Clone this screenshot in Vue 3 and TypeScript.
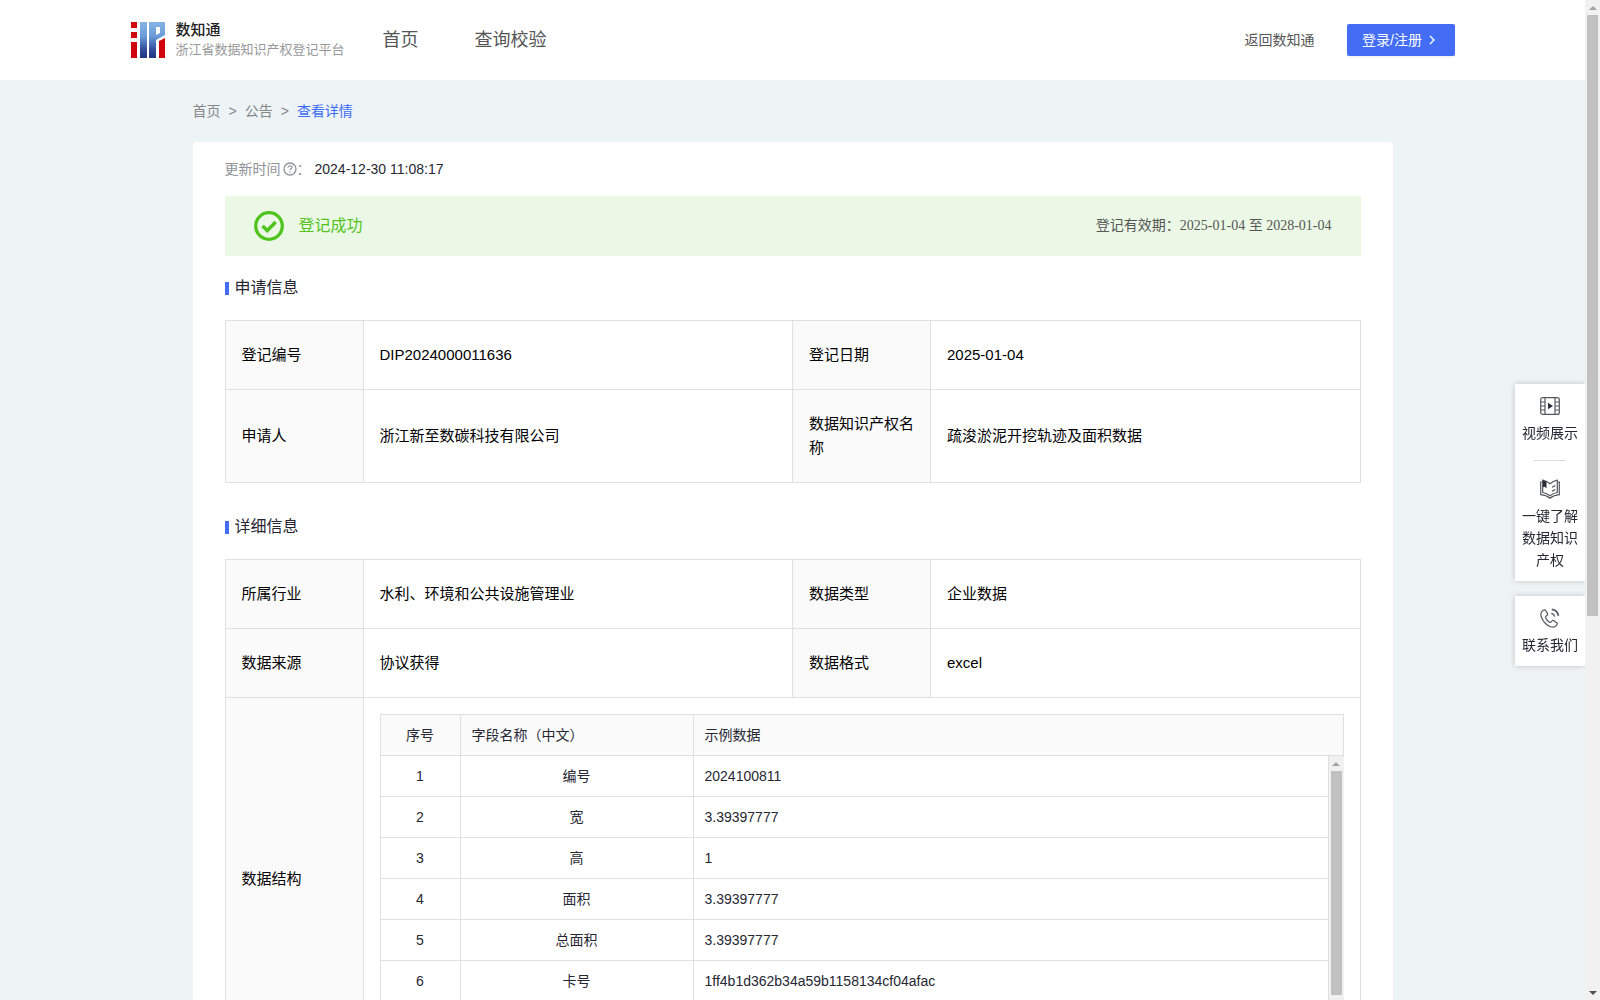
<script setup lang="ts">
import { ref } from 'vue'

interface FieldRow {
  no: number
  name: string
  sample: string
}

const navItems: string[] = ['首页', '查询校验']

const rows = ref<FieldRow[]>([
  { no: 1, name: '编号', sample: '2024100811' },
  { no: 2, name: '宽', sample: '3.39397777' },
  { no: 3, name: '高', sample: '1' },
  { no: 4, name: '面积', sample: '3.39397777' },
  { no: 5, name: '总面积', sample: '3.39397777' },
  { no: 6, name: '卡号', sample: '1ff4b1d362b34a59b1158134cf04afac' },
])
</script>

<template>
  <div class="shell">
    <div class="page">
      <header class="header">
        <div class="header-inner">
          <a class="logo" href="#">
            <svg class="logo-mark" width="34" height="36" viewBox="0 0 34 36" aria-hidden="true">
              <defs>
                <linearGradient id="logoBlue" gradientUnits="userSpaceOnUse" x1="0" y1="0" x2="0" y2="36">
                  <stop offset="0" stop-color="#86b4e4" />
                  <stop offset="0.4" stop-color="#6a9bd8" />
                  <stop offset="0.75" stop-color="#34509f" />
                  <stop offset="1" stop-color="#24357f" />
                </linearGradient>
              </defs>
              <path fill="#d0060c" d="M0 0h6v6H0zM0 10h6v6H0zM0 20h6v16H0zM28 19l6-3v20h-6z" />
              <path fill="url(#logoBlue)" d="M9 0h7v36H9z" />
              <path fill="url(#logoBlue)" fill-rule="evenodd" d="M18 0h16v13l-9 5v18h-7zM25 5v8l4-2V5z" />
            </svg>
            <span class="logo-text">
              <strong>数知通</strong>
              <span>浙江省数据知识产权登记平台</span>
            </span>
          </a>
          <nav class="nav">
            <a v-for="item in navItems" :key="item" href="#">{{ item }}</a>
          </nav>
          <a class="back" href="#">返回数知通</a>
          <button class="login" type="button">
            <span>登录/注册</span>
            <svg width="10" height="10" viewBox="0 0 10 10" aria-hidden="true">
              <path d="M3 1l4 4-4 4" fill="none" stroke="#fff" stroke-width="1.4" />
            </svg>
          </button>
        </div>
      </header>

      <main class="content">
        <nav class="crumbs">
          <a href="#">首页</a><span>&gt;</span><a href="#">公告</a><span>&gt;</span><a class="current" href="#">查看详情</a>
        </nav>

        <section class="card">
          <div class="updated">
            <span class="muted">更新时间</span>
            <svg width="14" height="14" viewBox="0 0 14 14" aria-hidden="true">
              <circle cx="7" cy="7" r="6" fill="none" stroke="#909399" stroke-width="1.3" />
              <path d="M5 5.6c0-2.5 4-2.4 4-.2C9 6.8 7 6.700 7 8.300M7 9.400v1.300" fill="none" stroke="#909399" stroke-width="1.200" />
            </svg>
            <span class="muted">：</span>
            <time>2024-12-30 11:08:17</time>
          </div>

          <div class="banner">
            <svg width="30" height="30" viewBox="0 0 30 30" aria-hidden="true">
              <circle cx="15" cy="15" r="13.300" fill="none" stroke="#4fc41c" stroke-width="3.300" />
              <path d="M8.500 15l4.800 4.500 8.400-8.500" fill="none" stroke="#4fc41c" stroke-width="3.600" />
            </svg>
            <span class="status">登记成功</span>
            <span class="validity">登记有效期：2025-01-04 至 2028-01-04</span>
          </div>

          <h2>申请信息</h2>
          <table class="info">
            <colgroup><col class="label" /><col /><col class="label" /><col /></colgroup>
            <tbody>
              <tr>
                <th scope="row">登记编号</th>
                <td>DIP2024000011636</td>
                <th scope="row">登记日期</th>
                <td>2025-01-04</td>
              </tr>
              <tr>
                <th scope="row">申请人</th>
                <td>浙江新至数碳科技有限公司</td>
                <th scope="row">数据知识产权名称</th>
                <td>疏浚淤泥开挖轨迹及面积数据</td>
              </tr>
            </tbody>
          </table>

          <h2 class="spaced">详细信息</h2>
          <table class="info">
            <colgroup><col class="label" /><col /><col class="label" /><col /></colgroup>
            <tbody>
              <tr>
                <th scope="row">所属行业</th>
                <td>水利、环境和公共设施管理业</td>
                <th scope="row">数据类型</th>
                <td>企业数据</td>
              </tr>
              <tr>
                <th scope="row">数据来源</th>
                <td>协议获得</td>
                <th scope="row">数据格式</th>
                <td>excel</td>
              </tr>
              <tr>
                <th scope="row">数据结构</th>
                <td class="nest" colspan="3">
                  <div class="fields">
                    <table class="grid grid-head">
                      <colgroup><col class="no" /><col class="name" /><col /></colgroup>
                      <thead>
                        <tr>
                          <th scope="col" class="center">序号</th>
                          <th scope="col">字段名称（中文）</th>
                          <th scope="col">示例数据</th>
                        </tr>
                      </thead>
                    </table>
                    <div class="grid-body">
                      <table class="grid">
                        <colgroup><col class="no" /><col class="name" /><col /></colgroup>
                        <tbody>
                          <tr v-for="row in rows" :key="row.no">
                            <td class="center">{{ row.no }}</td>
                            <td class="center">{{ row.name }}</td>
                            <td>{{ row.sample }}</td>
                          </tr>
                        </tbody>
                      </table>
                      <div class="bar" aria-hidden="true">
                        <i class="arrow up"></i>
                        <div class="rail"><div class="thumb inner"></div></div>
                        <i class="arrow down"></i>
                      </div>
                    </div>
                  </div>
                </td>
              </tr>
            </tbody>
          </table>
        </section>
      </main>
    </div>

    <div class="bar page-bar" aria-hidden="true">
      <i class="arrow up"></i>
      <div class="rail"><div class="thumb outer"></div></div>
      <i class="arrow down dark"></i>
    </div>

    <aside class="float">
      <div class="float-card">
        <a href="#">
          <svg width="20" height="20" viewBox="0 0 20 20" fill="none" stroke="#55565f" stroke-width="1.200" aria-hidden="true">
            <rect x="0.700" y="1.600" width="18.600" height="16.800" rx="2" />
            <path d="M5 1.600v16.800M15 1.600v16.800M1 6h4M1 10h4M1 14h4M15 6h4M15 10h4M15 14h4" />
            <path d="M8 6.800l5 3.200-5 3.200z" fill="#2b2c36" stroke="none" />
          </svg>
          <span>视频展示</span>
        </a>
        <hr />
        <a href="#">
          <svg width="20" height="20" viewBox="0 0 20 20" fill="none" stroke="#55565f" stroke-width="1.200" aria-hidden="true">
            <path d="M2.700 1.200v12.300c3 .5 5.300 1.600 7.300 3.300 2-1.700 4.500-2.900 7.300-3.300V1.200C14.500 1.800 12 3 10 4.800 8 3 5.500 1.800 2.700 1.200z" />
            <path d="M2.700 3H.7v12.600c3.500.3 6.500 1.300 9.300 3.700 2.800-2.400 5.800-3.400 9.300-3.700V3h-2M12 8.200l3.200-1.600M12 12.200l3.200-1.600" />
            <path d="M3 1.300l3.500 1.500v6.700L4.700 7.800 3 8.200z" fill="#2b2c36" stroke="none" />
          </svg>
          <span>一键了解数据知识产权</span>
        </a>
      </div>
      <div class="float-card">
        <a href="#">
          <svg width="20" height="20" viewBox="0 0 20 20" fill="none" stroke="#55565f" stroke-width="1.200" aria-hidden="true">
            <path d="M3.200 2.200C1 3.600.4 6 1.200 8.500c1.600 5 5 8.600 9.600 10.200 2.400.8 4.800.2 6.200-2 .5-.8.300-1.500-.4-2l-2.800-2c-.7-.5-1.500-.4-2 .3l-.8 1c-.4.500-.9.600-1.500.2-2-1.200-3.300-2.800-4-4.700-.2-.6 0-1 .5-1.400l1-.7c.7-.5.800-1.200.400-2L5.800 2.800c-.5-1-1.600-1.200-2.600-.6z" />
            <path d="M11.300 5.400c1.800.4 3 1.500 3.300 3.300" />
            <path d="M11.800 1.400c3.800.5 6.100 2.800 6.600 6.400" stroke-width="1.600" />
          </svg>
          <span>联系我们</span>
        </a>
      </div>
    </aside>
  </div>
</template>

<style>
body {
  margin: 0;
}
</style>

<style scoped>
.shell {
  display: flex;
  height: 100vh;
  overflow: hidden;
  background: #eef3f6;
  color: #262733;
  font: 14px/22px 'Liberation Sans', 'Noto Sans CJK SC', sans-serif;
}

.shell * {
  box-sizing: border-box;
}

a {
  color: inherit;
  text-decoration: none;
}

.page {
  flex: 1;
  min-width: 0;
}

.header {
  background: #fff;
}

.header-inner {
  display: flex;
  align-items: center;
  max-width: 1324px;
  height: 80px;
  margin: 0 auto;
}

.logo {
  display: flex;
  align-items: center;
  gap: 11px;
  width: 252px;
}

.logo-text {
  display: flex;
  flex-direction: column;
  color: #98999b;
  font-size: 13px;
  line-height: 20px;
  white-space: nowrap;
}

.logo-text strong {
  color: #222;
  font-size: 15px;
  font-weight: 500;
}

.nav {
  display: flex;
  flex: 1;
  gap: 56px;
  color: #555;
  font-size: 18px;
}

.back {
  margin-right: 32px;
  color: #555;
}

.login {
  display: flex;
  align-items: center;
  justify-content: center;
  gap: 5px;
  width: 108px;
  height: 32px;
  padding: 0 2px 0 0;
  border: 0;
  border-radius: 2px;
  background: #446df5;
  box-shadow: 0 2px 0 rgba(0, 0, 0, 0.04);
  color: #fff;
  font: inherit;
}

.content {
  max-width: 1200px;
  margin: 0 auto;
}

.crumbs {
  display: flex;
  align-items: center;
  gap: 8px;
  height: 62px;
  color: #858789;
}

.crumbs .current {
  color: #3b6cf6;
}

.card {
  padding: 0 32px 32px;
  border-radius: 4px;
  background: #fff;
}

.updated {
  display: flex;
  align-items: center;
  height: 54px;
}

.updated svg {
  margin-left: 2px;
}

.updated time {
  margin-left: 4px;
}

.muted {
  color: #909399;
}

.banner {
  display: flex;
  align-items: center;
  height: 60px;
  padding: 0 29px;
  background: #ebf8e6;
}

.status {
  flex: 1;
  margin-left: 15px;
  color: #52c41a;
  font-size: 16px;
}

.validity {
  color: #555;
  font-family: 'Liberation Serif', 'Noto Sans CJK SC', serif;
}

h2 {
  display: flex;
  align-items: center;
  gap: 6px;
  height: 64px;
  margin: 0;
  font-size: 16px;
  font-weight: 400;
}

h2::before {
  width: 4px;
  height: 13px;
  background: #446df5;
  content: '';
}

h2.spaced {
  margin-top: 12px;
}

table {
  width: 100%;
  table-layout: fixed;
}

th {
  background: #fafafa;
  font-weight: 400;
  text-align: left;
}

.info {
  border-collapse: collapse;
}

.info > tbody > tr > th,
.info > tbody > tr > td {
  padding: 22px 16px;
  border: 1px solid #e0e0e0;
  color: #000;
  font-size: 15px;
  line-height: 24px;
}

.info > tbody > tr > td.nest {
  padding: 16px;
}

.label {
  width: 138px;
}

.fields {
  color: #262733;
  font-size: 14px;
}

.grid {
  border-collapse: separate;
  border-spacing: 0;
}

.grid th,
.grid td {
  height: 41px;
  padding: 0 11px;
  border-right: 1px solid #e0e0e0;
  border-bottom: 1px solid #e0e0e0;
  font-size: 14px;
  line-height: 22px;
}

.grid-head {
  border-top: 1px solid #e0e0e0;
}

.grid th:first-child,
.grid td:first-child {
  border-left: 1px solid #e0e0e0;
}

.grid .center {
  text-align: center;
}

.no {
  width: 81px;
}

.name {
  width: 233px;
}

.grid-body {
  display: flex;
  align-items: flex-start;
  height: 288px;
  overflow: hidden;
}

.grid-body .grid {
  flex: 1;
}

.bar {
  display: flex;
  flex: none;
  flex-direction: column;
  align-self: stretch;
  width: 15px;
  background: #f1f1f1;
}

.rail {
  flex: 1;
  padding: 0 2px;
}

.thumb {
  background: #c1c1c1;
}

.thumb.inner {
  height: 87%;
}

.thumb.outer {
  height: 62%;
}

.arrow {
  display: flex;
  align-items: center;
  justify-content: center;
  height: 15px;
}

.arrow::before {
  border: 4px solid transparent;
  content: '';
}

.arrow.up::before {
  border-top: 0;
  border-bottom-color: #a3a3a3;
}

.arrow.down::before {
  border-bottom: 0;
  border-top-color: #a3a3a3;
}

.arrow.dark::before {
  border-top-color: #505050;
}

.float {
  position: fixed;
  top: 384px;
  right: 15px;
  display: flex;
  flex-direction: column;
  gap: 15px;
  width: 70px;
}

.float-card {
  background: #fff;
  box-shadow: 0 0 6px rgba(0, 0, 0, 0.2);
  clip-path: inset(-10px 0 -10px -10px);
}

.float-card a {
  display: flex;
  flex-direction: column;
  align-items: center;
  gap: 6px;
  padding: 12px 7px 10px;
  text-align: center;
}

.float-card hr {
  width: 32px;
  height: 1px;
  margin: 6px auto;
  border: 0;
  background: #dcdcdc;
}
</style>
